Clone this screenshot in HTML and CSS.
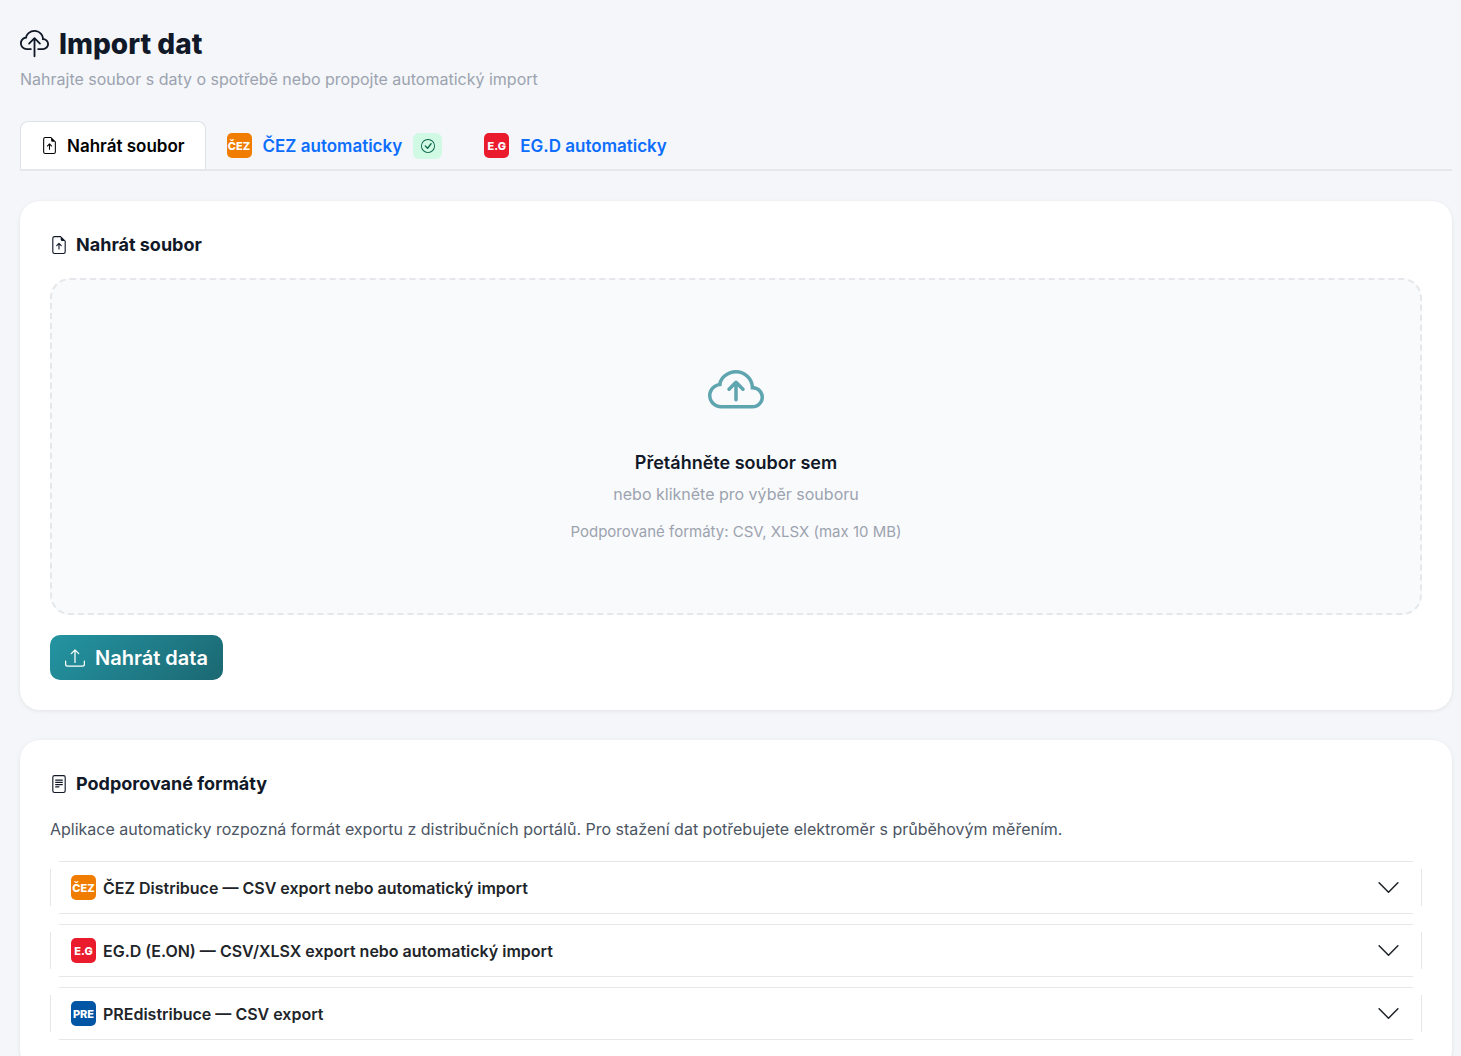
FILE: index.html
```html
<!DOCTYPE html>
<html lang="cs">
<head>
<meta charset="utf-8">
<meta name="viewport" content="width=device-width, initial-scale=1">
<title>Import dat</title>
<link rel="stylesheet" href="styles.css">
</head>
<body>
<svg class="sprite" aria-hidden="true">
  <symbol id="cloud-upload" viewBox="0 0 16 16"><path fill-rule="evenodd" d="M4.406 1.342A5.53 5.53 0 0 1 8 0c2.69 0 4.923 2 5.166 4.579C14.758 4.804 16 6.137 16 7.773 16 9.569 14.502 11 12.687 11H10a.5.5 0 0 1 0-1h2.688C13.979 10 15 8.988 15 7.773c0-1.216-1.02-2.228-2.313-2.228h-.5v-.5C12.188 2.825 10.328 1 8 1a4.53 4.53 0 0 0-2.941 1.1c-.757.652-1.153 1.438-1.153 2.055v.448l-.445.049C2.064 4.805 1 5.952 1 7.318 1 8.785 2.23 10 3.781 10H6a.5.5 0 0 1 0 1H3.781C1.708 11 0 9.366 0 7.318c0-1.763 1.266-3.223 2.942-3.593.143-.863.698-1.723 1.464-2.383"/><path fill-rule="evenodd" d="M7.646 4.146a.5.5 0 0 1 .708 0l3 3a.5.5 0 0 1-.708.708L8.5 5.707V14.5a.5.5 0 0 1-1 0V5.707L5.354 7.854a.5.5 0 1 1-.708-.708z"/></symbol>
  <symbol id="cloud-arrow" viewBox="0 0 16 16"><path fill-rule="evenodd" d="M7.646 5.146a.5.5 0 0 1 .708 0l2 2a.5.5 0 0 1-.708.708L8.5 6.707V10.5a.5.5 0 0 1-1 0V6.707L6.354 7.854a.5.5 0 1 1-.708-.708z"/><path d="M4.406 3.342A5.53 5.53 0 0 1 8 2c2.69 0 4.923 2 5.166 4.579C14.758 6.804 16 8.137 16 9.773 16 11.569 14.502 13 12.687 13H3.781C1.708 13 0 11.366 0 9.318c0-1.763 1.266-3.223 2.942-3.593.143-.863.698-1.723 1.464-2.383m.653.757c-.757.653-1.153 1.44-1.153 2.056v.448l-.445.049C2.064 6.805 1 7.952 1 9.318 1 10.785 2.23 12 3.781 12h8.906C13.98 12 15 10.988 15 9.773c0-1.216-1.02-2.228-2.313-2.228h-.5v-.5C12.188 4.825 10.328 3 8 3a4.53 4.53 0 0 0-2.941 1.1z"/></symbol>
  <symbol id="file-up" viewBox="0 0 16 16"><path d="M8.5 11.5a.5.5 0 0 1-1 0V7.707L6.354 8.854a.5.5 0 1 1-.708-.708l2-2a.5.5 0 0 1 .708 0l2 2a.5.5 0 0 1-.708.708L8.5 7.707z"/><path d="M14 14V4.5L9.5 0H4a2 2 0 0 0-2 2v12a2 2 0 0 0 2 2h8a2 2 0 0 0 2-2M9.5 3A1.5 1.5 0 0 0 11 4.5h2V14a1 1 0 0 1-1 1H4a1 1 0 0 1-1-1V2a1 1 0 0 1 1-1h5.5z"/></symbol>
  <symbol id="file-text" viewBox="0 0 16 16"><path d="M5 4a.5.5 0 0 0 0 1h6a.5.5 0 0 0 0-1zm-.5 2.5A.5.5 0 0 1 5 6h6a.5.5 0 0 1 0 1H5a.5.5 0 0 1-.5-.5M5 8a.5.5 0 0 0 0 1h6a.5.5 0 0 0 0-1zm0 2a.5.5 0 0 0 0 1h3a.5.5 0 0 0 0-1z"/><path d="M2 2a2 2 0 0 1 2-2h8a2 2 0 0 1 2 2v12a2 2 0 0 1-2 2H4a2 2 0 0 1-2-2zm10-1H4a1 1 0 0 0-1 1v12a1 1 0 0 0 1 1h8a1 1 0 0 0 1-1V2a1 1 0 0 0-1-1"/></symbol>
  <symbol id="upload" viewBox="0 0 16 16"><path d="M.5 9.9a.5.5 0 0 1 .5.5v2.5a1 1 0 0 0 1 1h12a1 1 0 0 0 1-1v-2.5a.5.5 0 0 1 1 0v2.5a2 2 0 0 1-2 2H2a2 2 0 0 1-2-2v-2.5a.5.5 0 0 1 .5-.5"/><path d="M7.646 1.146a.5.5 0 0 1 .708 0l3 3a.5.5 0 0 1-.708.708L8.5 2.707V11.5a.5.5 0 0 1-1 0V2.707L5.354 4.854a.5.5 0 1 1-.708-.708z"/></symbol>
  <symbol id="check" viewBox="0 0 16 16"><path d="M8 15A7 7 0 1 1 8 1a7 7 0 0 1 0 14m0 1A8 8 0 1 0 8 0a8 8 0 0 0 0 16"/><path d="M10.97 4.97a.235.235 0 0 0-.02.022L7.477 9.417 5.384 7.323a.75.75 0 0 0-1.06 1.06L6.97 11.03a.75.75 0 0 0 1.079-.02l3.992-4.99a.75.75 0 0 0-1.071-1.05"/></symbol>
  <symbol id="chevron" viewBox="0 0 16 16"><path fill="none" stroke="currentColor" stroke-linecap="round" stroke-linejoin="round" d="m2 5 6 6 6-6"/></symbol>
</svg>
<main class="page">
  <header class="page-header">
    <h1 class="page-title"><svg class="icon icon-title" aria-hidden="true"><use href="#cloud-upload"/></svg>Import dat</h1>
    <p class="page-subtitle">Nahrajte soubor s daty o spotřebě nebo propojte automatický import</p>
  </header>

  <nav class="tabs">
    <button type="button" class="tab tab-active"><svg class="icon icon-tab" aria-hidden="true"><use href="#file-up"/></svg>Nahrát soubor</button>
    <button type="button" class="tab"><span class="logo logo-cez">ČEZ</span>ČEZ automaticky<span class="status"><svg class="icon icon-status" aria-hidden="true"><use href="#check"/></svg></span></button>
    <button type="button" class="tab"><span class="logo logo-egd">E.G</span>EG.D automaticky</button>
  </nav>

  <section class="card">
    <h2 class="card-title"><svg class="icon icon-card" aria-hidden="true"><use href="#file-up"/></svg>Nahrát soubor</h2>
    <button type="button" class="dropzone">
      <svg class="icon icon-drop" aria-hidden="true"><use href="#cloud-arrow"/></svg>
      <span class="drop-title">Přetáhněte soubor sem</span>
      <span class="drop-text">nebo klikněte pro výběr souboru</span>
      <span class="drop-hint">Podporované formáty: CSV, XLSX (max 10 MB)</span>
    </button>
    <button type="submit" class="submit"><svg class="icon icon-submit" aria-hidden="true"><use href="#upload"/></svg>Nahrát data</button>
  </section>

  <section class="card">
    <h2 class="card-title"><svg class="icon icon-card" aria-hidden="true"><use href="#file-text"/></svg>Podporované formáty</h2>
    <p class="card-text">Aplikace automaticky rozpozná formát exportu z distribučních portálů. Pro stažení dat potřebujete elektroměr s průběhovým měřením.</p>
    <div class="accordion">
      <button type="button" class="accordion-item" aria-expanded="false"><span class="logo logo-cez">ČEZ</span><span class="accordion-label">ČEZ Distribuce — CSV export nebo automatický import</span><svg class="icon icon-chevron" aria-hidden="true"><use href="#chevron"/></svg></button>
      <button type="button" class="accordion-item" aria-expanded="false"><span class="logo logo-egd">E.G</span><span class="accordion-label">EG.D (E.ON) — CSV/XLSX export nebo automatický import</span><svg class="icon icon-chevron" aria-hidden="true"><use href="#chevron"/></svg></button>
      <button type="button" class="accordion-item" aria-expanded="false"><span class="logo logo-pre">PRE</span><span class="accordion-label">PREdistribuce — CSV export</span><svg class="icon icon-chevron" aria-hidden="true"><use href="#chevron"/></svg></button>
    </div>
  </section>
</main>
</body>
</html>
```
FILE: styles.css
```css
*, *::before, *::after { box-sizing: border-box; }

body {
  margin: 0;
  background: #f4f6fa;
  color: #111827;
  font-family: Inter, "Noto Sans", sans-serif;
  font-size: 16px;
  line-height: 24px;
}

h1, h2, p { margin: 0; }
button { font: inherit; color: inherit; border: 0; background: none; cursor: pointer; }

.sprite { display: none; }
.icon { display: block; flex: none; fill: currentColor; }
.icon-title { width: 29px; height: 29px; }
.icon-tab { width: 17px; height: 17px; }
.icon-card { width: 18px; height: 18px; }
.icon-status { width: 14px; height: 14px; }
.icon-drop { width: 56px; height: 56px; color: #5fa5af; }
.icon-submit { width: 20px; height: 20px; }
.icon-chevron { width: 25px; height: 25px; color: #212529; }

.page { padding: 24px 9px 24px 20px; }

.page-header { margin-bottom: 26px; }
.page-title {
  display: flex;
  align-items: center;
  gap: 10px;
  font-size: 28px;
  font-weight: 800;
  line-height: 40px;
}
.page-subtitle { color: #9ca3af; line-height: 31px; }

.tabs {
  display: flex;
  margin-bottom: 30px;
  border-bottom: 2px solid #e5e7eb;
}
.tab {
  display: flex;
  align-items: center;
  gap: 11px;
  height: 48px;
  padding: 0 20px;
  border: 1px solid transparent;
  border-bottom: 0;
  border-radius: 8px 8px 0 0;
  color: #0d6efd;
  font-size: 17px;
  font-weight: 600;
}
.tab-active { gap: 9px; background: #fff; border-color: #dee2e6; color: #000; }

.logo {
  display: flex;
  flex: none;
  align-items: center;
  justify-content: center;
  width: 25px;
  height: 25px;
  border-radius: 5px;
  color: #fff;
  font-size: 11px;
  font-weight: 800;
}
.logo-cez { background: #f07d00; }
.logo-egd { background: #ea1b2d; }
.logo-pre { background: #0055a5; }

.status {
  display: flex;
  align-items: center;
  justify-content: center;
  width: 29px;
  height: 26px;
  border-radius: 6px;
  background: #d1fae5;
  color: #065f46;
}

.card {
  margin-bottom: 30px;
  padding: 30px;
  border-radius: 20px;
  background: #fff;
  box-shadow: 0 1px 4px rgba(0, 0, 0, 0.08);
}
.card-title {
  display: flex;
  align-items: center;
  gap: 8px;
  margin-bottom: 20px;
  font-size: 18px;
  font-weight: 700;
  line-height: 27px;
}
.card-text { margin-bottom: 20px; color: #4b5563; }

.dropzone {
  display: flex;
  flex-direction: column;
  align-items: center;
  width: 100%;
  margin-bottom: 20px;
  padding: 83px 20px 69px;
  border: 2px dashed #e5e7eb;
  border-radius: 20px;
  background: #f9fafc;
}
.drop-title { margin-top: 30px; font-size: 18px; font-weight: 600; line-height: 28px; }
.drop-text { margin-top: 5px; color: #9ca3af; }
.drop-hint { margin-top: 14px; color: #9ca3af; font-size: 15px; }

.submit {
  display: flex;
  align-items: center;
  gap: 10px;
  height: 45px;
  padding: 0 15px;
  border-radius: 10px;
  background: linear-gradient(135deg, #2494a2, #1b6872);
  color: #fff;
  font-size: 20px;
  font-weight: 600;
}

.accordion { display: flex; flex-direction: column; gap: 10px; }
/* Hairlines stop short of the corners on every side. */
.accordion-item {
  display: flex;
  align-items: center;
  gap: 7px;
  width: 100%;
  height: 53px;
  padding: 0 21px;
  background:
    linear-gradient(#e5e7eb, #e5e7eb) top / calc(100% - 18px) 1px no-repeat,
    linear-gradient(#e5e7eb, #e5e7eb) bottom / calc(100% - 18px) 1px no-repeat,
    linear-gradient(#e5e7eb, #e5e7eb) left / 1px calc(100% - 16px) no-repeat,
    linear-gradient(#e5e7eb, #e5e7eb) right / 1px calc(100% - 16px) no-repeat;
  color: #212529;
  font-weight: 600;
  text-align: left;
}
.accordion-label { flex: 1; }
```
